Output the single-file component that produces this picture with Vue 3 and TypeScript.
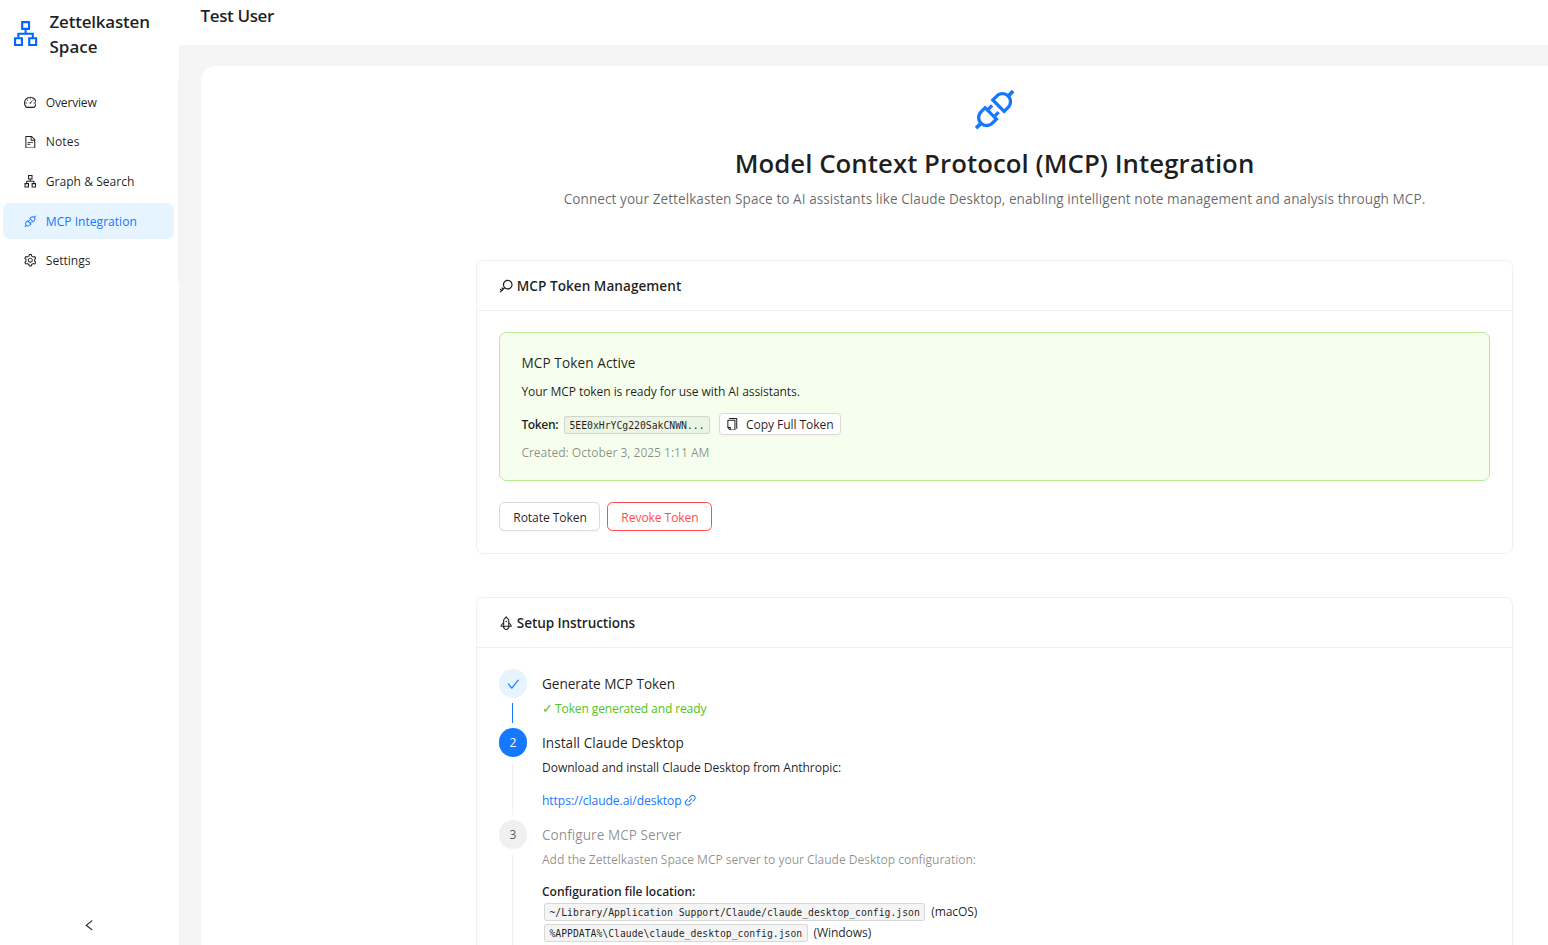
<script setup lang="ts">
const icons = {
  cluster: 'M908 640H804V488c0-4.4-3.6-8-8-8H548v-96h108c8.8 0 16-7.2 16-16V80c0-8.8-7.2-16-16-16H368c-8.8 0-16 7.2-16 16v288c0 8.8 7.2 16 16 16h108v96H228c-4.4 0-8 3.6-8 8v152H116c-8.8 0-16 7.2-16 16v288c0 8.8 7.2 16 16 16h288c8.8 0 16-7.2 16-16V656c0-8.8-7.2-16-16-16H292v-88h440v88H620c-8.8 0-16 7.2-16 16v288c0 8.8 7.2 16 16 16h288c8.8 0 16-7.2 16-16V656c0-8.8-7.2-16-16-16zm-564 76v168H176V716h168zm84-408V140h168v168H428zm420 576H680V716h168v168z',
  dashboard: 'M924.8 385.6a446.7 446.7 0 00-96-142.4 446.7 446.7 0 00-142.4-96C631.1 123.8 572.5 112 512 112s-119.1 11.8-174.4 35.2a446.7 446.7 0 00-142.4 96 446.7 446.7 0 00-96 142.4C75.8 440.9 64 499.5 64 560c0 132.7 58.3 257.7 159.9 343.1l1.7 1.4c5.8 4.8 13.1 7.5 20.6 7.5h531.7c7.5 0 14.8-2.7 20.6-7.5l1.7-1.4C901.7 817.7 960 692.7 960 560c0-60.5-11.9-119.1-35.2-174.4zM761.4 836H262.6A371.12 371.12 0 01140 560c0-99.4 38.7-192.8 109-263 70.3-70.3 163.7-109 263-109 99.4 0 192.8 38.7 263 109 70.3 70.3 109 163.7 109 263 0 105.6-44.5 205.5-122.6 276zM623.5 421.5a8.03 8.03 0 00-11.3 0L527.7 506c-18.7-5-39.4-.2-54.1 14.5a55.95 55.95 0 000 79.2 55.95 55.95 0 0079.2 0 55.87 55.87 0 0014.5-54.1l84.5-84.5c3.1-3.1 3.1-8.2 0-11.3l-28.3-28.3zM490 320h44c4.4 0 8-3.6 8-8v-80c0-4.4-3.6-8-8-8h-44c-4.4 0-8 3.6-8 8v80c0 4.4 3.6 8 8 8zm260 218v44c0 4.4 3.6 8 8 8h80c4.4 0 8-3.6 8-8v-44c0-4.4-3.6-8-8-8h-80c-4.4 0-8 3.6-8 8zm12.7-197.2l-31.1-31.1a8.03 8.03 0 00-11.3 0l-56.6 56.6a8.03 8.03 0 000 11.3l31.1 31.1c3.1 3.1 8.2 3.1 11.3 0l56.6-56.6c3.1-3.1 3.1-8.2 0-11.3zm-458.6-31.1a8.03 8.03 0 00-11.3 0l-31.1 31.1a8.03 8.03 0 000 11.3l56.6 56.6c3.1 3.1 8.2 3.1 11.3 0l31.1-31.1c3.1-3.1 3.1-8.2 0-11.3l-56.6-56.6zM262 530h-80c-4.4 0-8 3.6-8 8v44c0 4.4 3.6 8 8 8h80c4.4 0 8-3.6 8-8v-44c0-4.4-3.6-8-8-8z',
  file: 'M854.6 288.6L639.4 73.4c-6-6-14.1-9.4-22.6-9.4H192c-17.7 0-32 14.3-32 32v832c0 17.7 14.3 32 32 32h640c17.7 0 32-14.3 32-32V311.3c0-8.5-3.4-16.7-9.4-22.7zM790.2 326H602V137.8L790.2 326zm1.8 562H232V136h302v216a42 42 0 0042 42h216v494zM504 618H320c-4.4 0-8 3.6-8 8v48c0 4.4 3.6 8 8 8h184c4.4 0 8-3.6 8-8v-48c0-4.4-3.6-8-8-8zM312 490v48c0 4.4 3.6 8 8 8h384c4.4 0 8-3.6 8-8v-48c0-4.4-3.6-8-8-8H320c-4.4 0-8 3.6-8 8z',
  api: 'M917.7 148.8l-42.4-42.4c-1.6-1.6-3.6-2.3-5.7-2.3s-4.1.8-5.7 2.3l-76.1 76.1a199.27 199.27 0 00-112.1-34.3c-51.2 0-102.4 19.5-141.5 58.6L432.3 308.7a8.03 8.03 0 000 11.3L704 591.7c1.6 1.6 3.6 2.3 5.7 2.3 2 0 4.1-.8 5.7-2.3l101.9-101.9c68.9-69 77-175.7 24.3-253.5l76.1-76.1c3.1-3.2 3.1-8.3 0-11.4zM769.1 441.7l-59.4 59.4-186.8-186.8 59.4-59.4c24.9-24.9 58.1-38.7 93.4-38.7 35.3 0 68.4 13.7 93.4 38.7 24.9 24.9 38.7 58.1 38.7 93.4 0 35.3-13.8 68.4-38.7 93.4zm-190.2 105a8.03 8.03 0 00-11.3 0L501 613.3 410.7 523l66.7-66.7c3.1-3.1 3.1-8.2 0-11.3L441 408.6a8.03 8.03 0 00-11.3 0L363 475.3l-43-43a7.85 7.85 0 00-5.7-2.3c-2 0-4.1.8-5.7 2.3L206.8 534.2c-68.9 69-77 175.7-24.3 253.5l-76.1 76.1a8.03 8.03 0 000 11.3l42.4 42.4c1.6 1.6 3.6 2.3 5.7 2.3s4.1-.8 5.7-2.3l76.1-76.1c33.7 22.9 72.9 34.3 112.1 34.3 51.2 0 102.4-19.5 141.5-58.6l101.9-101.9c3.1-3.1 3.1-8.2 0-11.3l-43-43 66.7-66.7c3.1-3.1 3.1-8.2 0-11.3l-36.6-36.2zM441.7 769.1a131.32 131.32 0 01-93.4 38.7c-35.3 0-68.4-13.7-93.4-38.7a131.32 131.32 0 01-38.7-93.4c0-35.3 13.7-68.4 38.7-93.4l59.4-59.4 186.8 186.8-59.4 59.4z',
  setting: 'M924.8 625.7l-65.5-56c3.1-19 4.7-38.4 4.7-57.8s-1.6-38.8-4.7-57.8l65.5-56a32.03 32.03 0 009.3-35.2l-.9-2.6a443.74 443.74 0 00-79.7-137.9l-1.8-2.1a32.12 32.12 0 00-35.1-9.5l-81.3 28.9c-30-24.6-63.5-44-99.7-57.6l-15.7-85a32.05 32.05 0 00-25.8-25.7l-2.7-.5c-52.1-9.4-106.9-9.4-159 0l-2.7.5a32.05 32.05 0 00-25.8 25.7l-15.8 85.4a351.86 351.86 0 00-99 57.4l-81.9-29.1a32 32 0 00-35.1 9.5l-1.8 2.1a446.02 446.02 0 00-79.7 137.9l-.9 2.6c-4.5 12.5-.8 26.5 9.3 35.2l66.3 56.6c-3.1 18.8-4.6 38-4.6 57.1 0 19.2 1.5 38.4 4.6 57.1L99 625.5a32.03 32.03 0 00-9.3 35.2l.9 2.6c18.1 50.4 44.9 96.9 79.7 137.9l1.8 2.1a32.12 32.12 0 0035.1 9.5l81.9-29.1c29.8 24.5 63.1 43.9 99 57.4l15.8 85.4a32.05 32.05 0 0025.8 25.7l2.7.5a449.4 449.4 0 00159 0l2.7-.5a32.05 32.05 0 0025.8-25.7l15.7-85a350 350 0 0099.7-57.6l81.3 28.9a32 32 0 0035.1-9.5l1.8-2.1c34.8-41.1 61.6-87.5 79.7-137.9l.9-2.6c4.5-12.3.8-26.3-9.3-35zM788.3 465.9c2.5 15.1 3.8 30.6 3.8 46.1s-1.3 31-3.8 46.1l-6.6 40.1 74.7 63.9a370.03 370.03 0 01-42.6 73.6L721 702.8l-31.4 25.8c-23.9 19.6-50.5 35-79.3 45.8l-38.1 14.3-17.9 97a377.5 377.5 0 01-85 0l-17.9-97.2-37.8-14.5c-28.5-10.8-55-26.2-78.7-45.7l-31.4-25.9-93.4 33.2c-17-22.9-31.2-47.6-42.6-73.6l75.5-64.5-6.5-40c-2.4-14.9-3.7-30.3-3.7-45.5 0-15.3 1.2-30.6 3.7-45.5l6.5-40-75.5-64.5c11.3-26.1 25.6-50.7 42.6-73.6l93.4 33.2 31.4-25.9c23.7-19.5 50.2-34.9 78.7-45.7l37.9-14.3 17.9-97.2c28.1-3.2 56.8-3.2 85 0l17.9 97 38.1 14.3c28.7 10.8 55.4 26.2 79.3 45.8l31.4 25.8 92.8-32.9c17 22.9 31.2 47.6 42.6 73.6L781.8 426l6.5 39.9zM512 326c-97.2 0-176 78.8-176 176s78.8 176 176 176 176-78.8 176-176-78.8-176-176-176zm79.2 255.2A111.6 111.6 0 01512 614c-29.9 0-58-11.7-79.2-32.8A111.6 111.6 0 01400 502c0-29.9 11.7-58 32.8-79.2C454 401.6 482.1 390 512 390c29.9 0 58 11.6 79.2 32.8A111.6 111.6 0 01624 502c0 29.9-11.7 58-32.8 79.2z',
  key: 'M608 112c-167.9 0-304 136.1-304 304 0 70.3 23.9 135 63.9 186.5l-41.1 41.1-62.3-62.3a8.15 8.15 0 00-11.4 0l-39.8 39.8a8.15 8.15 0 000 11.4l62.3 62.3-44.9 44.9-62.3-62.3a8.15 8.15 0 00-11.4 0l-39.8 39.8a8.15 8.15 0 000 11.4l62.3 62.3-65.3 65.3a8.03 8.03 0 000 11.3l42.3 42.3c3.1 3.1 8.2 3.1 11.3 0l253.6-253.6A304.06 304.06 0 00608 720c167.9 0 304-136.1 304-304S775.9 112 608 112zm161.2 465.2C726.2 620.3 668.9 644 608 644c-60.9 0-118.2-23.7-161.2-66.8-43.1-43-66.8-100.3-66.8-161.2 0-60.9 23.7-118.2 66.8-161.2 43-43.1 100.3-66.8 161.2-66.8 60.9 0 118.2 23.7 161.2 66.8 43.1 43 66.8 100.3 66.8 161.2 0 60.9-23.7 118.2-66.8 161.2z',
  rocket: 'M864 736c0-111.6-65.4-208-160-252.9V317.3c0-15.1-5.3-29.7-15.1-41.2L536.5 95.4C530.1 87.8 521 84 512 84s-18.1 3.8-24.5 11.4L335.1 276.1a63.97 63.97 0 00-15.1 41.2v165.8C225.4 528 160 624.4 160 736h156.5c-2.3 7.2-3.5 15-3.5 23.8 0 22.1 7.6 43.7 21.4 60.8a97.2 97.2 0 0043.1 30.6c23.1 54 75.6 88.8 134.5 88.8 29.1 0 57.3-8.6 81.4-24.8 23.6-15.8 41.9-37.9 53-64a97 97 0 0043.1-30.5 97.52 97.52 0 0021.4-60.8c0-8.4-1.1-16.4-3.1-23.8H864zM762.3 621.4c9.4 14.6 17 30.3 22.5 46.6H700V558.7a211.6 211.6 0 0162.3 62.7zM388 483.1V318.8l124-147 124 147V668H388V483.1zM239.2 668c5.5-16.3 13.1-32 22.5-46.6 16.3-25.2 37.5-46.5 62.3-62.7V668h-84.8zm388.9 116.2c-5.2 3-11.2 4.2-17.1 3.4l-19.5-2.4-2.8 19.4c-5.4 37.9-38.4 66.5-76.7 66.5-38.3 0-71.3-28.6-76.7-66.5l-2.8-19.5-19.5 2.5a27.7 27.7 0 01-17.1-3.5c-8.7-5-14.1-14.3-14.1-24.4 0-10.6 5.9-19.4 14.6-23.8h231.3c8.8 4.5 14.6 13.3 14.6 23.8-.1 10.2-5.5 19.6-14.2 24.5zM464 400a48 48 0 1096 0 48 48 0 10-96 0z',
  link: 'M574 665.4a8.03 8.03 0 00-11.3 0L446.5 781.6c-53.8 53.8-144.6 59.5-204 0-59.5-59.5-53.8-150.2 0-204l116.2-116.2c3.1-3.1 3.1-8.2 0-11.3l-39.8-39.8a8.03 8.03 0 00-11.3 0L191.4 526.5c-84.6 84.6-84.6 221.5 0 306s221.5 84.6 306 0l116.2-116.2c3.1-3.1 3.1-8.2 0-11.3L574 665.4zm258.6-474c-84.6-84.6-221.5-84.6-306 0L410.3 307.6a8.03 8.03 0 000 11.3l39.7 39.7c3.1 3.1 8.2 3.1 11.3 0l116.2-116.2c53.8-53.8 144.6-59.5 204 0 59.5 59.5 53.8 150.2 0 204L665.3 562.6a8.03 8.03 0 000 11.3l39.8 39.8c3.1 3.1 8.2 3.1 11.3 0l116.2-116.2c84.5-84.6 84.5-221.5 0-306.1zM610.1 372.3a8.03 8.03 0 00-11.3 0L372.3 598.7a8.03 8.03 0 000 11.3l39.6 39.6c3.1 3.1 8.2 3.1 11.3 0l226.4-226.4c3.1-3.1 3.1-8.2 0-11.3l-39.5-39.6z',
  copy: 'M832 64H296c-4.4 0-8 3.6-8 8v56c0 4.4 3.6 8 8 8h496v688c0 4.4 3.6 8 8 8h56c4.4 0 8-3.6 8-8V96c0-17.7-14.3-32-32-32zM704 192H192c-17.7 0-32 14.3-32 32v530.7c0 8.5 3.4 16.6 9.4 22.6l173.3 173.3c2.2 2.2 4.7 4 7.4 5.5v1.9h4.2c3.5 1.3 7.2 2 11 2H704c17.7 0 32-14.3 32-32V224c0-17.7-14.3-32-32-32zM350 856.2L263.9 770H350v86.2zM664 888H414V746c0-22.1-17.9-40-40-40H232V264h432v624z',
  check: 'M912 190h-69.9c-9.8 0-19.1 4.5-25.1 12.2L404.7 724.5 207 474a32 32 0 00-25.1-12.2H112c-6.7 0-10.4 7.7-6.3 12.9l273.9 347c12.8 16.2 37.4 16.2 50.3 0l488.4-618.9c4.1-5.1.4-12.8-6.3-12.8z',
  left: 'M724 218.3V141c0-6.7-7.7-10.4-12.9-6.3L260.3 486.8a31.86 31.86 0 000 50.3l450.8 352.1c5.3 4.1 12.9.4 12.9-6.3v-77.3c0-4.9-2.3-9.6-6.1-12.6l-360-281 360-281.1c3.8-3 6.1-7.7 6.1-12.6z',
}

interface MenuEntry {
  label: string
  icon: keyof typeof icons
  tone: string
  active?: boolean
}

const menu: MenuEntry[] = [
  { label: 'Overview', icon: 'dashboard', tone: 'tight' },
  { label: 'Notes', icon: 'file', tone: 'loose' },
  { label: 'Graph & Search', icon: 'cluster', tone: 'plain' },
  { label: 'MCP Integration', icon: 'api', tone: 'plain', active: true },
  { label: 'Settings', icon: 'setting', tone: 'plain' },
]
</script>

<template>
  <div class="app">
    <aside class="sider">
      <div class="brand">
        <svg class="brand-icon" viewBox="64 64 896 896"><path :d="icons.cluster" /></svg>
        <div class="brand-name"><span class="brand-first">Zettelkasten</span><br />Space</div>
      </div>
      <nav class="menu">
        <a v-for="item in menu" :key="item.label" class="menu-item" :class="[item.tone, { active: item.active }]">
          <svg class="icon" viewBox="64 64 896 896"><path :d="icons[item.icon]" /></svg>
          <span class="menu-label">{{ item.label }}</span>
        </a>
      </nav>
      <div class="collapse">
        <svg class="icon" viewBox="64 64 896 896"><path :d="icons.left" /></svg>
      </div>
    </aside>

    <div class="main">
      <header class="topbar">Test User</header>
      <main class="content">
        <section class="hero">
          <svg class="hero-icon" viewBox="64 64 896 896"><path :d="icons.api" /></svg>
          <h1>Model Context Protocol (MCP) Integration</h1>
          <p>Connect your Zettelkasten Space to AI assistants like Claude Desktop, enabling intelligent note management and analysis through MCP.</p>
        </section>

        <section class="card">
          <div class="card-head">
            <svg class="head-icon" viewBox="64 64 896 896"><path :d="icons.key" /></svg>
            <h2 class="head-token">MCP Token Management</h2>
          </div>
          <div class="card-body">
            <div class="alert">
              <div class="alert-title">MCP Token Active</div>
              <div class="alert-text">Your MCP token is ready for use with AI assistants.</div>
              <div class="token-row">
                <strong>Token:</strong>
                <code>5EE0xHrYCg220SakCNWN...</code>
                <button class="btn small">
                  <svg class="icon" viewBox="64 64 896 896"><path :d="icons.copy" /></svg>
                  <span>Copy Full Token</span>
                </button>
              </div>
              <div class="created">Created: October 3, 2025 1:11 AM</div>
            </div>
            <div class="actions">
              <button class="btn rotate">Rotate Token</button>
              <button class="btn danger">Revoke Token</button>
            </div>
          </div>
        </section>

        <section class="card">
          <div class="card-head">
            <svg class="head-icon" viewBox="64 64 896 896"><path :d="icons.rocket" /></svg>
            <h2 class="head-setup">Setup Instructions</h2>
          </div>
          <div class="card-body">
            <div class="step finish">
              <div class="rail">
                <span class="dot"><svg class="icon" viewBox="64 64 896 896"><path :d="icons.check" /></svg></span>
                <span class="tail"></span>
              </div>
              <div class="step-main">
                <div class="step-title generate">Generate MCP Token</div>
                <div class="step-text success"><span class="tick">✓</span>Token generated and ready</div>
              </div>
            </div>
            <div class="step process">
              <div class="rail"><span class="dot">2</span><span class="tail"></span></div>
              <div class="step-main">
                <div class="step-title install">Install Claude Desktop</div>
                <div class="step-text download">Download and install Claude Desktop from Anthropic:</div>
                <a class="link"><span>https://claude.ai/desktop</span><svg class="icon" viewBox="64 64 896 896"><path :d="icons.link" /></svg></a>
              </div>
            </div>
            <div class="step wait">
              <div class="rail"><span class="dot">3</span><span class="tail"></span></div>
              <div class="step-main">
                <div class="step-title">Configure MCP Server</div>
                <div class="step-text muted">Add the Zettelkasten Space MCP server to your Claude Desktop configuration:</div>
                <div class="paths">
                  <strong>Configuration file location:</strong>
                  <div class="path"><code>~/Library/Application Support/Claude/claude_desktop_config.json</code><span class="mac">(macOS)</span></div>
                  <div class="path"><code>%APPDATA%\Claude\claude_desktop_config.json</code><span class="win">(Windows)</span></div>
                </div>
              </div>
            </div>
          </div>
        </section>
      </main>
    </div>
  </div>
</template>

<style>
html,
body {
  overflow: hidden;
  background: #fff;
}
</style>

<style scoped>
* {
  box-sizing: border-box;
}
.app {
  display: flex;
  width: 100vw;
  height: 100vh;
  overflow: hidden;
  background: #f5f5f5;
  color: rgba(0, 0, 0, 0.88);
  font: 12.1px/20px 'Open Sans', 'Noto Sans', sans-serif;
}
svg {
  display: block;
  flex: none;
  fill: currentColor;
}
.icon {
  width: 12.6px;
  height: 12.6px;
}

/* Sidebar */
.sider {
  display: flex;
  flex: none;
  flex-direction: column;
  width: 179px;
  background: #fff;
}
.brand {
  display: flex;
  gap: 11.3px;
  height: 80.8px;
  padding: 9px 0 0 13px;
}
.brand-icon {
  width: 25.2px;
  height: 25.2px;
  margin-top: 12px;
  color: #0066ff;
}
.brand-name {
  font-size: 17px;
  font-weight: 600;
  line-height: 25px;
}
.brand-first {
  letter-spacing: -0.21px;
}
.menu {
  display: flex;
  flex-direction: column;
  gap: 3.6px;
  padding: 3.6px 4px 3.6px 3.2px;
  border-right: 1px solid #f0f0f0;
}
.menu-item {
  display: flex;
  align-items: center;
  gap: 9.6px;
  height: 36px;
  padding-left: 20.4px;
  border-radius: 7px;
}
.menu-item.active {
  background: #e6f4ff;
  color: #1677ff;
}
.menu-label {
  padding-top: 1px;
}
.tight {
  letter-spacing: -0.2px;
}
.loose {
  letter-spacing: 0.1px;
}
.collapse {
  display: flex;
  align-items: center;
  justify-content: center;
  height: 39px;
  margin-top: auto;
}

/* Main column */
.main {
  flex: 1;
  min-width: 0;
}
.topbar {
  height: 45px;
  padding-left: 21.6px;
  background: #fff;
  font-size: 17px;
  font-weight: 600;
  line-height: 32px;
  letter-spacing: -0.4px;
}
.content {
  display: flex;
  flex-direction: column;
  align-items: center;
  width: 1587px;
  margin: 21px 0 0 22px;
  padding: 22px 0;
  border-radius: 14.4px 0 0 0;
  background: #fff;
}
.hero {
  display: flex;
  flex-direction: column;
  align-items: center;
  height: 172px;
  white-space: nowrap;
}
.hero-icon {
  width: 43.2px;
  height: 43.2px;
  color: #1677ff;
}
.hero h1 {
  margin: 14px 0 0;
  font-size: 25.8px;
  font-weight: 600;
  line-height: 36px;
  letter-spacing: 0.03px;
}
.hero p {
  margin: 7px 0 0;
  color: rgba(0, 0, 0, 0.6);
  font-size: 13.6px;
  line-height: 22px;
  letter-spacing: 0.053px;
}
.card {
  width: 1037px;
  margin-bottom: 43px;
  border: 1px solid #f0f0f0;
  border-radius: 7.2px;
}
.card-head {
  display: flex;
  align-items: center;
  gap: 3.4px;
  height: 50px;
  padding-left: 22px;
  border-bottom: 1px solid #f0f0f0;
}
.head-icon {
  width: 14.4px;
  height: 14.4px;
  margin-top: 1px;
}
.card-head h2 {
  margin: 0;
  font-size: 13.6px;
  font-weight: 600;
  line-height: 22px;
}
.head-token {
  letter-spacing: 0.03px;
}
.head-setup {
  letter-spacing: -0.1px;
}
.card-body {
  padding: 21px 22px 22px;
}

/* Token box */
.alert {
  height: 149px;
  padding: 19px 21.4px 0;
  border: 1px solid #b7eb8f;
  border-radius: 7.2px;
  background: #f6ffed;
}
.alert-title {
  font-size: 13.6px;
  line-height: 22px;
  letter-spacing: 0.1px;
}
.alert-text {
  margin-top: 8px;
  letter-spacing: -0.1px;
}
.token-row {
  display: flex;
  align-items: center;
  height: 22px;
  margin-top: 11px;
}
strong {
  font-weight: 600;
  letter-spacing: -0.06px;
}
.token-row strong {
  width: 42.6px;
  padding-top: 2px;
  letter-spacing: -0.4px;
}
.token-row code {
  margin-top: 2px;
}
code {
  height: 18px;
  padding: 0 4.4px;
  border: 1px solid rgba(100, 100, 100, 0.2);
  border-radius: 3px;
  background: rgba(150, 150, 150, 0.1);
  font: 9.78px/17px 'DejaVu Sans Mono', monospace;
}
.created {
  margin-top: 8px;
  color: rgba(0, 0, 0, 0.45);
  letter-spacing: -0.05px;
}
.btn {
  display: flex;
  align-items: center;
  justify-content: center;
  padding: 2px 0 0 1px;
  border: 1px solid #d9d9d9;
  border-radius: 5.4px;
  background: #fff;
  box-shadow: 0 2px 0 rgba(0, 0, 0, 0.02);
  color: rgba(0, 0, 0, 0.88);
  font: inherit;
  letter-spacing: -0.09px;
}
.small {
  gap: 7px;
  width: 122px;
  height: 22px;
  margin-left: 9px;
  padding: 0;
  border-radius: 3.6px;
}
.small span {
  padding-top: 2px;
}
.actions {
  display: flex;
  gap: 7px;
  margin-top: 21px;
}
.rotate {
  width: 101px;
  height: 29px;
}
.danger {
  width: 105px;
  height: 29px;
  border-color: #ff4d4f;
  color: #ff4d4f;
}

/* Steps */
.step {
  display: flex;
  gap: 15px;
}
.finish {
  height: 59px;
}
.process {
  height: 92px;
}
.wait {
  height: 400px;
}
.rail {
  display: flex;
  flex-direction: column;
  align-items: center;
  width: 28px;
}
.dot {
  display: flex;
  flex: none;
  align-items: center;
  justify-content: center;
  width: 28.8px;
  height: 28.8px;
  padding-top: 2px;
  border-radius: 50%;
  background: #f0f0f0;
  color: rgba(0, 0, 0, 0.65);
}
.finish .dot {
  background: #e6f4ff;
  color: #1677ff;
}
.process .dot {
  background: #1677ff;
  color: #fff;
}
.tail {
  flex: 1;
  width: 1px;
  margin: 5px 1px 5px 0;
  background: #f0f0f0;
}
.finish .tail {
  background: #1677ff;
}
.step-main {
  white-space: nowrap;
}
.step-title {
  font-size: 13.6px;
  line-height: 29px;
  letter-spacing: 0.04px;
}
.generate {
  letter-spacing: -0.05px;
}
.install {
  letter-spacing: 0.03px;
}
.wait .step-title,
.muted {
  color: rgba(0, 0, 0, 0.45);
}
.step-text {
  margin-top: 1px;
  letter-spacing: -0.05px;
}
.download {
  letter-spacing: -0.07px;
}
.success {
  display: flex;
  color: #52c41a;
  letter-spacing: -0.15px;
}
.tick {
  width: 13px;
  font-size: 13px;
  font-family: 'DejaVu Sans', sans-serif;
}
.link {
  display: flex;
  align-items: center;
  gap: 2.4px;
  margin-top: 13px;
  color: #1677ff;
  letter-spacing: -0.06px;
}
.link .icon {
  margin-top: -1px;
}
.paths {
  margin-top: 12px;
}
.paths strong {
  display: block;
}
.path {
  display: flex;
  align-items: center;
  height: 21px;
  padding-left: 2px;
}
.path:first-of-type {
  margin-top: -1px;
}
.mac,
.win {
  margin-left: 6px;
  letter-spacing: -0.12px;
}
</style>
